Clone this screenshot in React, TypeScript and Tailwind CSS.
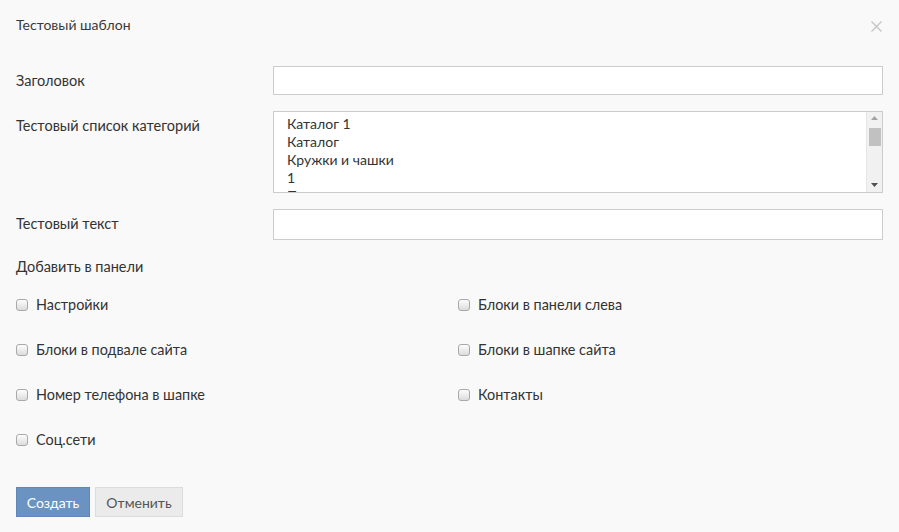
import React from 'react';

const categories = ['Каталог 1', 'Каталог', 'Кружки и чашки', '1', 'Посуда'];

const panels: [string, string | null][] = [
  ['Настройки', 'Блоки в панели слева'],
  ['Блоки в подвале сайта', 'Блоки в шапке сайта'],
  ['Номер телефона в шапке', 'Контакты'],
  ['Соц.сети', null],
];

function Checkbox({label}: {label: string}) {
  return (
    <label className="flex items-center gap-[8px] text-[14.4px] text-[#333]">
      <span className="block h-[12px] w-[12px] rounded-[3px] border border-[#a9a9a9] bg-gradient-to-b from-[#fdfdfd] to-[#dcdcdc]" />
      {label}
    </label>
  );
}

function Row({label, children}: {label: string; children: React.ReactNode}) {
  return (
    <div className="flex items-start">
      <div className="w-[257px] shrink-0 pt-[6px] text-[14.5px] leading-[18px] text-[#333]">{label}</div>
      <div className="flex-1">{children}</div>
    </div>
  );
}

export default function App() {
  return (
    <div
      className="h-[532px] w-[899px] bg-[#f9f9f9] px-[16px]"
      style={{fontFamily: 'Lato, "Open Sans", sans-serif'}}
    >
      <div className="flex items-center justify-between pt-[16px]">
        <h1 className="text-[14px] leading-[18px] text-[#3a3a3a]">Тестовый шаблон</h1>
        <svg width="11" height="11" viewBox="0 0 11 11" className="mr-[1px] mt-[2px]">
          <path d="M0.5 0.5 L10.5 10.5 M10.5 0.5 L0.5 10.5" stroke="#c4c4c4" strokeWidth="1.3" />
        </svg>
      </div>

      <div className="mt-[32px] flex flex-col gap-[16px]">
        <Row label="Заголовок">
          <div className="h-[29px] border border-[#ccc] bg-white" />
        </Row>
        <Row label="Тестовый список категорий">
          <div className="flex h-[82px] border border-[#ccc] bg-white">
            <ul className="flex-1 overflow-hidden pl-[13px] pt-[3px] text-[14px] leading-[18px] text-[#333]">
              {categories.map((c) => (
                <li key={c}>{c}</li>
              ))}
            </ul>
            <div className="flex w-[16px] flex-col items-center border-l border-[#e6e6e6] bg-[#f1f1f1] py-[3px]">
              <svg width="7" height="4" viewBox="0 0 7 4" className="mt-[1px]">
                <path d="M0 4 L3.5 0 L7 4 Z" fill="#a3a3a3" />
              </svg>
              <div className="mt-[8px] h-[18px] w-[12px] bg-[#c1c1c1]" />
              <svg width="7" height="4" viewBox="0 0 7 4" className="mt-auto mb-[2px]">
                <path d="M0 0 L3.5 4 L7 0 Z" fill="#505050" />
              </svg>
            </div>
          </div>
        </Row>
        <Row label="Тестовый текст">
          <div className="h-[31px] border border-[#ccc] bg-white" />
        </Row>
      </div>

      <div className="mt-[18px] text-[14.5px] leading-[18px] text-[#333]">Добавить в панели</div>

      <div className="mt-[18px] flex flex-col gap-[27px]">
        {panels.map(([left, right]) => (
          <div key={left} className="grid h-[18px] grid-cols-[442px_1fr]">
            <Checkbox label={left} />
            {right && <Checkbox label={right} />}
          </div>
        ))}
      </div>

      <div className="mt-[40px] flex gap-[5px]">
        <button className="h-[30px] w-[74px] border border-[#5f87b8] bg-[#6b93c2] text-[14px] text-white">
          Создать
        </button>
        <button className="h-[30px] w-[88px] border border-[#dcdcdc] bg-[#ebebeb] text-[14px] text-[#555]">
          Отменить
        </button>
      </div>
    </div>
  );
}
